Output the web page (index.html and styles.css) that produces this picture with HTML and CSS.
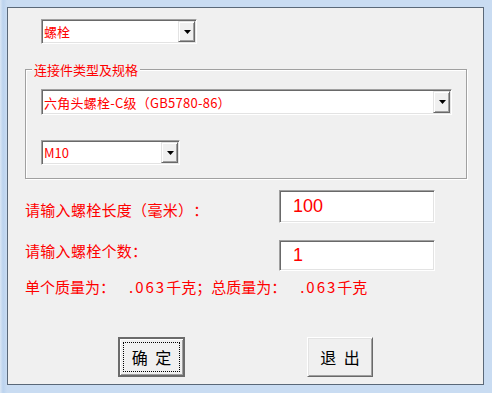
FILE: index.html
```html
<!DOCTYPE html>
<html lang="zh">
<head>
<meta charset="utf-8">
<title>螺栓</title>
<link rel="stylesheet" href="styles.css">
</head>
<body>
<div class="window">
  <div class="combo c1">
    <span class="combo-text">螺栓</span>
    <span class="drop"><svg width="7" height="4" viewBox="0 0 7 4"><polygon points="0,0 7,0 3.5,4" fill="#000"/></svg></span>
  </div>

  <fieldset class="group">
    <legend>连接件类型及规格</legend>
    <div class="combo c2">
      <span class="combo-text">六角头螺栓-C级（GB5780-86）</span>
      <span class="drop"><svg width="7" height="4" viewBox="0 0 7 4"><polygon points="0,0 7,0 3.5,4" fill="#000"/></svg></span>
    </div>
    <div class="combo c3">
      <span class="combo-text">M10</span>
      <span class="drop"><svg width="7" height="4" viewBox="0 0 7 4"><polygon points="0,0 7,0 3.5,4" fill="#000"/></svg></span>
    </div>
  </fieldset>

  <div class="row r1">
    <span class="label l1">请输入螺栓长度（毫米）：</span>
    <div class="textbox t1">100</div>
  </div>
  <div class="row r2">
    <span class="label l2">请输入螺栓个数：</span>
    <div class="textbox t2">1</div>
  </div>
  <div class="result">单个质量为：<span class="num">.063</span>千克；总质量为：<span class="num">.063</span>千克</div>

  <div class="buttons">
    <div class="btn ok"><span>确 定</span></div>
    <div class="btn quit"><span>退 出</span></div>
  </div>
</div>
</body>
</html>
```
FILE: styles.css
```css
html, body {
  margin: 0;
  padding: 0;
}
body {
  width: 492px;
  height: 393px;
  overflow: hidden;
  background: linear-gradient(90deg, #dbe7f5 0px, #bcd3ee 3px, #c9dcf2 7px, #c9dcf2 100%);
  font-family: "Noto Sans CJK SC", "Noto Sans", sans-serif;
  text-spacing-trim: space-all;
}
.window {
  margin: 7px 0 0 7px;
  width: 475px;
  height: 376px;
  border: 1px solid #5a6878;
  background: #f0f0f0;
  display: flex;
  flex-direction: column;
  align-items: flex-start;
}

/* combo boxes */
.combo {
  box-sizing: border-box;
  display: flex;
  align-items: stretch;
  background: #fff;
  border: 1px solid;
  border-color: #a0a0a0 #fff #fff #a0a0a0;
  box-shadow: inset 1px 1px 0 #696969, inset -1px -1px 0 #e3e3e3;
  padding: 1px;
}
.combo-text {
  flex: 1;
  display: flex;
  align-items: center;
  padding-left: 1px;
  color: #f00;
  font-size: 13px;
  line-height: 15px;
  white-space: nowrap;
}
.drop {
  box-sizing: border-box;
  width: 17px;
  display: flex;
  align-items: center;
  justify-content: center;
  background: #f0f0f0;
  border: 1px solid;
  border-color: #e3e3e3 #696969 #696969 #e3e3e3;
  box-shadow: inset 1px 1px 0 #fff, inset -1px -1px 0 #a0a0a0;
}
.drop svg {
  display: block;
  margin-left: 1px;
}
.c1 {
  margin: 11px 0 0 33px;
  width: 156px;
  height: 25px;
}

/* group box */
.group {
  box-sizing: border-box;
  margin: 18px 0 0 17px;
  padding: 0;
  min-width: 0;
  width: 442px;
  height: 117px;
  border: 1px solid #a0a0a0;
  box-shadow: inset 1px 1px 0 #fff, 1px 1px 0 #fff;
}
.group legend {
  margin-left: 6px;
  padding: 0 2px;
  color: #f00;
  font-size: 13px;
  line-height: 15px;
  background: #f0f0f0;
}
.c2 {
  margin: 12px 0 0 15px;
  width: 411px;
  height: 26px;
}
.c2 .combo-text {
  letter-spacing: 0.25px;
}
.c3 {
  margin: 25px 0 0 15px;
  width: 139px;
  height: 25px;
}

/* input rows */
.row {
  display: flex;
  align-items: flex-start;
  margin-left: 17px;
}
.r1 { margin-top: 11px; }
.r2 { margin-top: 17px; }
.label {
  width: 254px;
  color: #f00;
  font-size: 15px;
  line-height: 15px;
  letter-spacing: 0.3px;
  white-space: nowrap;
}
.l1 { margin-top: 12px; }
.l2 { margin-top: 3px; }
.textbox {
  box-sizing: border-box;
  width: 156px;
  display: flex;
  align-items: center;
  padding-left: 13px;
  background: #fff;
  border: 1px solid;
  border-color: #a0a0a0 #fff #fff #a0a0a0;
  box-shadow: inset 1px 1px 0 #696969, inset -1px -1px 0 #e3e3e3;
  color: #f00;
  font-family: "Liberation Sans", Arial, sans-serif;
  font-size: 18px;
}
.t1 { height: 33px; }
.t2 { height: 31px; }

.result {
  margin: 8px 0 0 17px;
  color: #f00;
  font-size: 15px;
  line-height: 15px;
  white-space: nowrap;
}
.num {
  margin-left: 14px;
  letter-spacing: 2px;
}

/* buttons */
.buttons {
  display: flex;
  gap: 122px;
  margin: 43px 0 0 110px;
}
.btn {
  box-sizing: border-box;
  height: 40px;
  display: flex;
  align-items: center;
  justify-content: center;
  background: #f0f0f0;
  color: #000;
  font-size: 16px;
  word-spacing: 4px;
  white-space: pre;
}
.ok {
  width: 67px;
  border: 2px solid #6b6b6b;
  box-shadow: inset 1px 1px 0 #fff, inset -1px -1px 0 #a0a0a0;
  outline: 1px dotted #000;
  outline-offset: -6px;
}
.quit {
  width: 66px;
  border: 1px solid;
  border-color: #fff #696969 #696969 #fff;
  box-shadow: inset 1px 1px 0 #e3e3e3, inset -1px -1px 0 #a0a0a0;
}
```
